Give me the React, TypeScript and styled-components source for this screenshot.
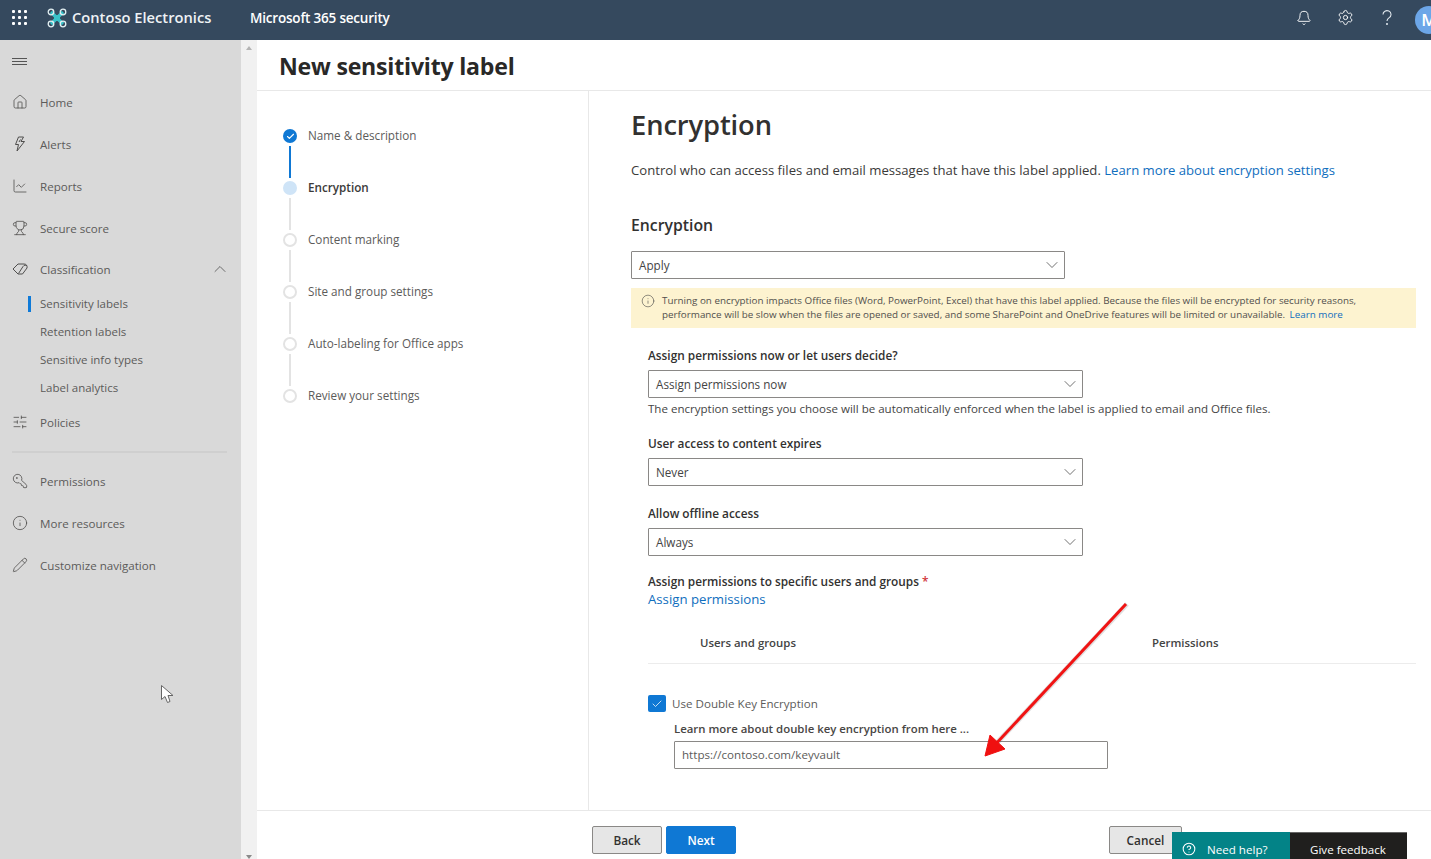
import { ReactNode } from "react";
import styled, { createGlobalStyle } from "styled-components";
import {
  Bell,
  ChevronDown,
  ChevronUp,
  CircleHelp,
  Home,
  Info,
  KeyRound,
  Pencil,
  Settings,
  SlidersHorizontal,
  Trophy,
  ChartLine,
  Check,
} from "lucide-react";

const GlobalStyle = createGlobalStyle`
  html, body {
    margin: 0;
    padding: 0;
    height: 100%;
    overflow: hidden;
    font-family: "Open Sans", "Noto Sans", sans-serif;
    color: #323130;
    background: #fff;
  }
  * { box-sizing: border-box; }
`;

const Page = styled.div`
  position: relative;
  width: 1431px;
  height: 859px;
  overflow: hidden;
  display: flex;
  flex-direction: column;
`;

const TopBar = styled.header`
  height: 40px;
  flex: none;
  background: #35495e;
  color: #fff;
  display: flex;
  align-items: center;
  overflow: hidden;
  padding-bottom: 5px;
`;

const Waffle = styled.div`
  width: 14px;
  margin-left: 12px;
  display: grid;
  grid-template-columns: repeat(3, 3px);
  gap: 3px;
  span {
    width: 3px;
    height: 3px;
    background: #fff;
    border-radius: 1px;
  }
`;

const Brand = styled.div`
  margin-left: 21px;
  display: flex;
  align-items: center;
  gap: 5px;
  width: 203px;
  font-size: 14.7px;
  font-weight: 600;
  color: #eef2f5;
  white-space: nowrap;
`;

const BrandName = styled.span`
  margin-top: -2px;
`;

const Product = styled.div`
  font-size: 13.5px;
  font-weight: 600;
  letter-spacing: -0.2px;
  padding-top: 1px;
`;

const TopIcons = styled.div`
  margin-left: auto;
  display: flex;
  align-items: center;
`;

const TopIcon = styled.div`
  width: 41.5px;
  display: flex;
  justify-content: center;
`;

const Avatar = styled.div`
  width: 28px;
  height: 28px;
  border-radius: 50%;
  background: #6ca6e8;
  margin: 5px -12px 0 7px;
  font-size: 17px;
  line-height: 28px;
  text-align: center;
  font-weight: 600;
`;

const Body = styled.div`
  flex: 1;
  display: flex;
  min-height: 0;
`;

const Sidebar = styled.nav`
  width: 241px;
  flex: none;
  background: #d9d9d9;
  padding: 14px 14px 0 12px;
  color: #5c5b5a;
`;

const MenuButton = styled.div`
  height: 15px;
  margin-bottom: 12px;
  display: flex;
  flex-direction: column;
  justify-content: center;
  gap: 2px;
  width: 15px;
  i {
    height: 1px;
    background: #555;
  }
`;

const NavRow = styled.div`
  height: 42px;
  display: flex;
  align-items: center;
  font-size: 11.6px;
  color: #5c5b5a;
  gap: 12px;
  svg {
    flex: none;
  }
`;

const ClassificationRow = styled(NavRow)`
  margin-top: -1px;
`;

const NavChevron = styled.span`
  margin-left: auto;
  margin-right: -3px;
  display: flex;
`;

const SubList = styled.div`
  margin: 0 0 -1px 28px;
`;

const SubRow = styled.div<{ $active?: boolean }>`
  position: relative;
  height: 28px;
  line-height: 28px;
  font-size: 11.5px;
  &::before {
    content: "";
    display: ${(p) => (p.$active ? "block" : "none")};
    position: absolute;
    left: -12px;
    top: 6px;
    width: 3px;
    height: 16px;
    background: #0f7ad8;
  }
`;

const NavDivider = styled.div`
  height: 2px;
  background: #cfcfcf;
  margin: 8px 0 7px;
`;

const ScrollStrip = styled.div`
  width: 16px;
  flex: none;
  background: #f1f1f1;
  display: flex;
  flex-direction: column;
  justify-content: space-between;
  align-items: center;
  padding: 6px 0 0;
`;

const ScrollArrow = styled.div<{ $down?: boolean }>`
  width: 0;
  height: 0;
  border-left: 3.5px solid transparent;
  border-right: 3.5px solid transparent;
  border-bottom: ${(p) => (p.$down ? "0" : "4px solid #b4b4b4")};
  border-top: ${(p) => (p.$down ? "4px solid #8a8a8a" : "0")};
`;

const Main = styled.main`
  flex: 1;
  min-width: 0;
  display: flex;
  flex-direction: column;
`;

const TitleBar = styled.div`
  height: 51px;
  flex: none;
  border-bottom: 1px solid #e8e8e8;
  padding: 0 0 0 22px;
  display: flex;
  align-items: center;
`;

const PageTitle = styled.h1`
  margin: 1px 0 0;
  font-size: 23.1px;
  font-weight: 700;
  letter-spacing: -0.2px;
  color: #292827;
`;

const Columns = styled.div`
  flex: 1;
  display: flex;
  min-height: 0;
`;

const StepsPane = styled.div`
  width: 332px;
  flex: none;
  border-right: 1px solid #e8e8e8;
  padding: 38px 0 0 26px;
`;

const Step = styled.div`
  display: flex;
  height: 14px;
  align-items: center;
  gap: 11px;
  font-size: 11.7px;
  color: #5c5b5a;
`;

const StepActive = styled(Step)`
  font-weight: 600;
  color: #3b3a39;
`;

const StepLabel = styled.span`
  margin-top: -2px;
`;

const StepConnector = styled.div<{ $done?: boolean }>`
  width: 2px;
  height: 32px;
  margin: 3px 0 3px 6px;
  background: ${(p) => (p.$done ? "#0f78d4" : "#e3e3e3")};
`;

const DotDone = styled.div`
  width: 14px;
  height: 14px;
  border-radius: 50%;
  background: #0f78d4;
  color: #fff;
  display: flex;
  align-items: center;
  justify-content: center;
  flex: none;
`;

const DotCurrent = styled.div`
  width: 14px;
  height: 14px;
  border-radius: 50%;
  background: #cfe4f7;
  flex: none;
`;

const DotPending = styled.div`
  width: 14px;
  height: 14px;
  border-radius: 50%;
  border: 2px solid #e3e3e3;
  background: #fff;
  flex: none;
`;

const Content = styled.section`
  flex: 1;
  min-width: 0;
  padding: 16px 15px 0 42px;
`;

const SectionTitle = styled.h2`
  margin: 0;
  height: 36px;
  line-height: 36px;
  font-size: 27.3px;
  font-weight: 600;
  color: #323130;
  letter-spacing: -0.1px;
`;

const Lead = styled.p`
  margin: 17px 0 0;
  height: 20px;
  line-height: 20px;
  font-size: 13.13px;
  color: #3b3a39;
  white-space: nowrap;
`;

const Link = styled.a`
  color: #106ebe;
`;

const BannerLink = styled(Link)`
  margin-left: 2px;
`;

const SubHeading = styled.h3`
  margin: 34px 0 0;
  height: 22px;
  line-height: 22px;
  font-size: 15.8px;
  font-weight: 600;
`;

const Select = styled.div<{ $w: number }>`
  width: ${(p) => p.$w}px;
  height: 28px;
  border: 1px solid #8a8886;
  border-radius: 1px;
  display: flex;
  align-items: center;
  justify-content: space-between;
  padding: 0 2px 1px 7px;
  font-size: 11.7px;
  color: #444;
  background: #fff;
`;

const TopSelect = styled(Select)`
  margin-top: 15px;
`;

const Banner = styled.div`
  margin-top: 9px;
  height: 40px;
  background: #fdf3d0;
  display: flex;
  gap: 7px;
  padding: 6px 0 0 10px;
  font-size: 9.84px;
  line-height: 13.5px;
  color: #514f4d;
  white-space: nowrap;
`;

const Indented = styled.div`
  padding-left: 17px;
`;

const FieldLabel = styled.div<{ $top: number }>`
  margin-top: ${(p) => p.$top}px;
  height: 18px;
  line-height: 16px;
  font-size: 11.84px;
  font-weight: 600;
  color: #323130;
  margin-bottom: 5px;
  white-space: nowrap;
`;

const KeyLabel = styled(FieldLabel)`
  font-size: 11.4px;
  color: #484644;
`;

const Required = styled.span`
  color: #d13438;
`;

const Hint = styled.div`
  margin-top: 1px;
  height: 20px;
  line-height: 20px;
  font-size: 11.55px;
  color: #444;
  white-space: nowrap;
`;

const AssignLink = styled.div`
  margin-top: -7px;
  height: 20px;
  line-height: 20px;
  font-size: 13.2px;
  color: #106ebe;
`;

const TableHead = styled.div`
  margin-top: 15px;
  height: 40px;
  border-bottom: 1px solid #ececec;
  display: grid;
  grid-template-columns: 452px 1fr;
  padding: 10px 0 0 52px;
  font-size: 11.4px;
  font-weight: 600;
  line-height: 18px;
  color: #444;
`;

const CheckRow = styled.div`
  margin-top: 31px;
  display: flex;
  align-items: center;
  gap: 6px;
  height: 17px;
  font-size: 11.6px;
  color: #5c5b5a;
`;

const CheckBox = styled.div`
  width: 18px;
  height: 17px;
  border-radius: 2px;
  background: #0f78d4;
  color: #fff;
  display: flex;
  align-items: center;
  justify-content: center;
`;

const KeyBlock = styled.div`
  padding-left: 26px;
`;

const KeyInput = styled(Select)`
  color: #5c5b5a;
  margin-top: -3px;
  font-size: 11.6px;
`;

const Footer = styled.footer`
  height: 49px;
  flex: none;
  border-top: 1px solid #e8e8e8;
  padding: 15px 249px 0 335px;
  display: flex;
  gap: 4px;
`;

const Button = styled.button`
  width: 70px;
  height: 28px;
  border: 1px solid #8a8886;
  border-radius: 2px;
  background: #e6e6e6;
  font: 600 11.8px "Open Sans", sans-serif;
  color: #323130;
  padding: 0;
`;

const NextButton = styled(Button)`
  border-color: #0f78d4;
  background: #0f78d4;
  color: #fff;
`;

const CancelButton = styled(Button)`
  width: 73px;
  margin-left: auto;
`;

const HelpDock = styled.div`
  position: absolute;
  left: 1172px;
  top: 832px;
  display: flex;
  height: 27px;
  font-size: 11.6px;
  color: #fff;
`;

const HelpTab = styled.div`
  width: 118px;
  background: #038387;
  display: flex;
  align-items: center;
  padding: 7px 0 0 10px;
  gap: 11px;
`;

const FeedbackTab = styled.div`
  width: 117px;
  background: #201f1e;
  border-top: 1px solid #666;
  padding: 8px 0 0 20px;
  line-height: 17px;
`;

const Overlay = styled.svg`
  position: absolute;
  left: 0;
  top: 0;
  pointer-events: none;
`;

const iconProps = { size: 16, strokeWidth: 1.2, color: "#4f4e4d" };
const chevronProps = { size: 20, strokeWidth: 1, color: "#555" };

const LogoMark = () => (
  <svg width="20" height="20" viewBox="0 0 20 20" fill="none">
    <path d="M4 4 L16 16 M16 4 L4 16" stroke="#39c2c9" strokeWidth="3.4" />
    <path d="M7 7h6v6H7z" fill="#39c2c9" />
    <g stroke="#e4f1f3" strokeWidth="1.3">
      <circle cx="4" cy="4" r="2.8" />
      <circle cx="16" cy="4" r="2.8" />
      <circle cx="4" cy="16" r="2.8" />
      <circle cx="16" cy="16" r="2.8" />
    </g>
  </svg>
);

const BoltIcon = () => (
  <svg width="16" height="16" viewBox="0 0 16 16" fill="none" stroke="#4f4e4d" strokeWidth="1" strokeLinejoin="round">
    <path d="M6.500 1 L3.500 8.500 H6.500 L5 15 L12.500 5.500 H9 L11.500 1 Z" />
    <path d="M8.500 3.500 L7 6" />
  </svg>
);

const TagIcon = () => (
  <svg width="16" height="16" viewBox="0 0 16 16" fill="none" stroke="#4f4e4d" strokeWidth="1" strokeLinejoin="round">
    <path d="M1 8 L6 3 H12 C14.500 3 15.500 5 15 7 L10.500 13 H6 Z" />
    <path d="M6.500 12.500 L11 5.500 C12 4 14 3.500 15 5" />
  </svg>
);

const Arrow = () => (
  <Overlay width="1431" height="859">
    <line x1="1127" y1="604" x2="994" y2="746" stroke="#000" strokeOpacity="0.12" strokeWidth="5" />
    <line x1="1126" y1="604" x2="993" y2="747" stroke="#f01414" strokeWidth="3" />
    <path d="M985 756 L990 735 L1005 749 Z" fill="#f01010" stroke="#f01010" strokeWidth="1" />
    <path
      d="M161.500 685.500 L161.500 699.500 L165 696.500 L167.500 702.500 L170 701.500 L168 695.500 L173 695.500 Z"
      fill="#fff"
      stroke="#666"
      strokeWidth="1"
    />
  </Overlay>
);

const primaryNav: { label: string; icon: ReactNode }[] = [
  { label: "Home", icon: <Home {...iconProps} /> },
  { label: "Alerts", icon: <BoltIcon /> },
  { label: "Reports", icon: <ChartLine {...iconProps} /> },
  { label: "Secure score", icon: <Trophy {...iconProps} /> },
];

const lowerNav: { label: string; icon: ReactNode }[] = [
  { label: "Permissions", icon: <KeyRound {...iconProps} style={{ transform: "scaleX(-1)" }} /> },
  { label: "More resources", icon: <Info {...iconProps} /> },
  { label: "Customize navigation", icon: <Pencil {...iconProps} /> },
];

const pendingSteps = ["Content marking", "Site and group settings", "Auto-labeling for Office apps", "Review your settings"];

export default function App() {
  return (
    <>
      <GlobalStyle />
      <Page>
        <TopBar>
          <Waffle>
            {Array.from({ length: 9 }).map((_, i) => (
              <span key={i} />
            ))}
          </Waffle>
          <Brand>
            <LogoMark />
            <BrandName>Contoso Electronics</BrandName>
          </Brand>
          <Product>Microsoft 365 security</Product>
          <TopIcons>
            <TopIcon>
              <Bell size={16} strokeWidth={1.4} color="#fff" />
            </TopIcon>
            <TopIcon>
              <Settings size={17} strokeWidth={1.3} color="#fff" />
            </TopIcon>
            <TopIcon>
              <svg width="12" height="16" viewBox="0 0 12 16" fill="none" stroke="#dfe6ec" strokeWidth="1.1">
                <path d="M2 4.500a4 3.800 0 1 1 6.200 3.100c-1.500 1-2.200 1.800-2.200 3.400" />
                <circle cx="6" cy="14" r="0.500" />
              </svg>
            </TopIcon>
            <Avatar>M</Avatar>
          </TopIcons>
        </TopBar>
        <Body>
          <Sidebar>
            <MenuButton>
              <i />
              <i />
              <i />
            </MenuButton>
            {primaryNav.map((item) => (
              <NavRow key={item.label}>
                {item.icon}
                {item.label}
              </NavRow>
            ))}
            <ClassificationRow>
              <TagIcon />
              Classification
              <NavChevron>
                <ChevronUp {...chevronProps} />
              </NavChevron>
            </ClassificationRow>
            <SubList>
              <SubRow $active>Sensitivity labels</SubRow>
              <SubRow>Retention labels</SubRow>
              <SubRow>Sensitive info types</SubRow>
              <SubRow>Label analytics</SubRow>
            </SubList>
            <NavRow>
              <SlidersHorizontal {...iconProps} />
              Policies
            </NavRow>
            <NavDivider />
            {lowerNav.map((item) => (
              <NavRow key={item.label}>
                {item.icon}
                {item.label}
              </NavRow>
            ))}
          </Sidebar>
          <ScrollStrip>
            <ScrollArrow />
            <ScrollArrow $down />
          </ScrollStrip>
          <Main>
            <TitleBar>
              <PageTitle>New sensitivity label</PageTitle>
            </TitleBar>
            <Columns>
              <StepsPane>
                <Step>
                  <DotDone>
                    <Check size={9} strokeWidth={3} />
                  </DotDone>
                  <StepLabel>Name &amp; description</StepLabel>
                </Step>
                <StepConnector $done />
                <StepActive>
                  <DotCurrent />
                  <StepLabel>Encryption</StepLabel>
                </StepActive>
                {pendingSteps.map((step) => (
                  <div key={step}>
                    <StepConnector />
                    <Step>
                      <DotPending />
                      <StepLabel>{step}</StepLabel>
                    </Step>
                  </div>
                ))}
              </StepsPane>
              <Content>
                <SectionTitle>Encryption</SectionTitle>
                <Lead>
                  Control who can access files and email messages that have this label applied.{" "}
                  <Link>Learn more about encryption settings</Link>
                </Lead>
                <SubHeading>Encryption</SubHeading>
                <TopSelect $w={434}>
                  Apply
                  <ChevronDown {...chevronProps} />
                </TopSelect>
                <Banner>
                  <Info size={14} strokeWidth={1} color="#444" />
                  <div>
                    Turning on encryption impacts Office files (Word, PowerPoint, Excel) that have this label applied. Because the files will be encrypted for security reasons,
                    <br />
                    performance will be slow when the files are opened or saved, and some SharePoint and OneDrive features will be limited or unavailable.{" "}
                    <BannerLink>Learn more</BannerLink>
                  </div>
                </Banner>
                <Indented>
                  <FieldLabel $top={19}>Assign permissions now or let users decide?</FieldLabel>
                  <Select $w={435}>
                    Assign permissions now
                    <ChevronDown {...chevronProps} />
                  </Select>
                  <Hint>The encryption settings you choose will be automatically enforced when the label is applied to email and Office files.</Hint>
                  <FieldLabel $top={16}>User access to content expires</FieldLabel>
                  <Select $w={435}>
                    Never
                    <ChevronDown {...chevronProps} />
                  </Select>
                  <FieldLabel $top={19}>Allow offline access</FieldLabel>
                  <Select $w={435}>
                    Always
                    <ChevronDown {...chevronProps} />
                  </Select>
                  <FieldLabel $top={17}>
                    Assign permissions to specific users and groups <Required>*</Required>
                  </FieldLabel>
                  <AssignLink>Assign permissions</AssignLink>
                  <TableHead>
                    <span>Users and groups</span>
                    <span>Permissions</span>
                  </TableHead>
                  <CheckRow>
                    <CheckBox>
                      <Check size={12} strokeWidth={1.5} />
                    </CheckBox>
                    Use Double Key Encryption
                  </CheckRow>
                  <KeyBlock>
                    <KeyLabel $top={9}>Learn more about double key encryption from here ...</KeyLabel>
                    <KeyInput $w={434}>https://contoso.com/keyvault</KeyInput>
                  </KeyBlock>
                </Indented>
              </Content>
            </Columns>
            <Footer>
              <Button>Back</Button>
              <NextButton>Next</NextButton>
              <CancelButton>Cancel</CancelButton>
            </Footer>
          </Main>
        </Body>
        <Arrow />
        <HelpDock>
          <HelpTab>
            <CircleHelp size={14} strokeWidth={1.8} />
            Need help?
          </HelpTab>
          <FeedbackTab>Give feedback</FeedbackTab>
        </HelpDock>
      </Page>
    </>
  );
}
